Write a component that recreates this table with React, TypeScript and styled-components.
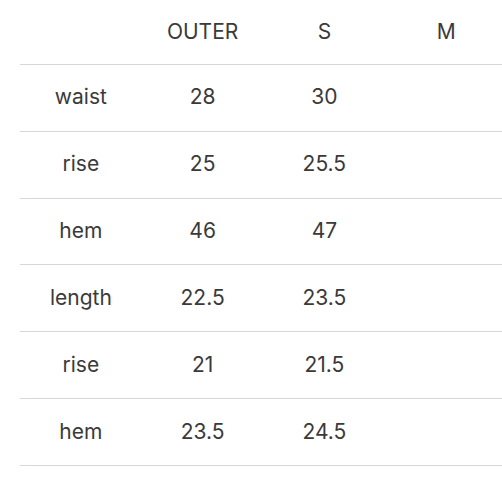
import * as React from "react";
import styled, { createGlobalStyle } from "styled-components";

const GlobalStyle = createGlobalStyle`
  html, body {
    margin: 0;
    padding: 0;
    background: #fff;
  }
  body {
    font-family: "Inter", "Noto Sans", sans-serif;
    color: #3a3a3a;
    overflow: hidden;
  }
`;

const Wrapper = styled.div`
  width: 502px;
  height: 480px;
  padding-left: 20px;
  box-sizing: border-box;
  overflow: hidden;
`;

const Table = styled.div`
  display: grid;
  grid-template-columns: repeat(4, 121.75px);
  width: 487px;
`;

const Row = styled.div<{ $header?: boolean }>`
  display: contents;
  & > div {
    height: ${(p) => (p.$header ? "65px" : "66.83px")};
    border-bottom: 1px solid #d6d6de;
  }
`;

const Cell = styled.div`
  display: flex;
  align-items: center;
  justify-content: center;
  font-size: 21px;
  font-weight: 400;
  color: #3a3a3a;
  padding-bottom: 2px;
  box-sizing: border-box;
`;

const sizes = ["OUTER", "S", "M"];

const rows: [string, string, string, string][] = [
  ["waist", "28", "30", ""],
  ["rise", "25", "25.5", ""],
  ["hem", "46", "47", ""],
  ["length", "22.5", "23.5", ""],
  ["rise", "21", "21.5", ""],
  ["hem", "23.5", "24.5", ""],
];

export default function App() {
  return (
    <>
      <GlobalStyle />
      <Wrapper>
        <Table>
          <Row $header>
            <Cell />
            {sizes.map((s) => (
              <Cell key={s}>{s}</Cell>
            ))}
          </Row>
          {rows.map((r, i) => (
            <Row key={i}>
              {r.map((v, j) => (
                <Cell key={j}>{v}</Cell>
              ))}
            </Row>
          ))}
        </Table>
      </Wrapper>
    </>
  );
}
